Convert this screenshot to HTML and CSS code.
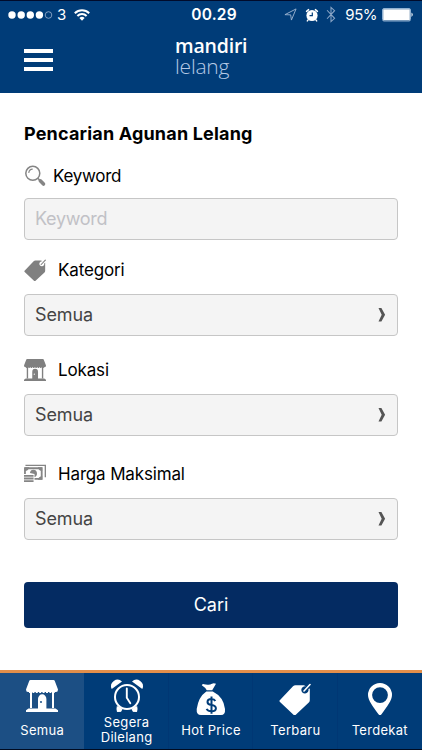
FILE: index.html
```html
<!DOCTYPE html>
<html lang="id">
<head>
<meta charset="utf-8">
<meta name="viewport" content="width=device-width, initial-scale=1">
<title>Mandiri Lelang</title>
<link rel="stylesheet" href="styles.css">
</head>
<body>
<svg class="symbols" aria-hidden="true">
  <symbol id="tag" viewBox="0 0 32 32">
    <path fill="currentColor" fill-rule="evenodd" d="M.8 17.200 14 3.200Q15 2.200 16.500 2.200H25L27 3.500A3.600 3.600 0 1 0 29.400 6L30.800 5.500V17.200Q30.800 18.600 29.800 19.600L16.800 31.800Q15.600 32.800 14.500 31.800L1 18.900Q0 18 .8 17.200Z"/>
    <path d="m25 8 6-6.500" fill="none" stroke="currentColor" stroke-width="1.600" stroke-linecap="round"/>
  </symbol>
  <symbol id="shop" viewBox="0 0 32 32">
    <path fill="currentColor" d="M4.500 0h23q1 0 1.300 1L32 9.500Q32 12 30 12H2Q0 12 0 9.500L3.200 1Q3.500 0 4.500 0ZM4 11h2v17H4zM26 11h2v17h-2zM12 28.500V19a4.200 4.700 0 0 1 8.400 0v9.500zM2.500 28.500h27L32 30.200V32H0v-1.800z"/>
    <path d="M3 12h26" stroke="currentColor" stroke-width="2" stroke-dasharray="2 1.400"/>
    <circle class="knob" cx="15" cy="22" r=".9"/>
  </symbol>
</svg>
<header class="header">
  <div class="status">
    <div class="signal">
      <svg class="dots" viewBox="0 0 46 10"><g fill="#fff"><circle cx="4" cy="5" r="3.700"/><circle cx="13.200" cy="5" r="3.700"/><circle cx="22.300" cy="5" r="3.700"/><circle cx="31.400" cy="5" r="3.700"/></g><circle cx="40.500" cy="5" r="3.300" fill="none" stroke="#9eb4d0" stroke-width=".8"/></svg>
      <span>3</span>
      <svg class="wifi" viewBox="0 0 16 12"><g fill="none" stroke="#fff" stroke-width="2"><path d="M.8 4.300a10.300 10.300 0 0 1 14.400 0M3.400 7a6.500 6.500 0 0 1 9.200 0"/></g><path fill="#fff" d="M5.400 9a3.700 3.700 0 0 1 5.200 0L8 11.800z"/></svg>
    </div>
    <time class="clock">00.29</time>
    <div class="device">
      <svg class="arrow" viewBox="0 0 14 14"><path d="M1 7.200 13 1 8 13 7.200 7.400Z" fill="none" stroke="#9cb3d0"/></svg>
      <svg class="alarm" viewBox="0 0 14 14"><circle cx="7" cy="7.500" r="5.600" fill="#fff"/><path d="M1.500 3.400 3.600 1.600M12.500 3.400 10.400 1.600M3 12l-.7.900m8.700-.9.700.9" stroke="#fff" stroke-width="1.400" stroke-linecap="round"/><path d="M7.300 4.500v3.200H4.500" fill="none" stroke="#003c78" stroke-width="1.200"/></svg>
      <svg class="bluetooth" viewBox="0 0 10 18"><path d="m.8 4.500 8 8.500L5 16.500v-15L8.800 5l-8 8.500" fill="none" stroke="#8da8c8" stroke-width="1.100"/></svg>
      <span class="percent">95%</span>
      <svg class="battery" viewBox="0 0 32 14"><rect x=".5" y=".5" width="28" height="12.500" rx="1.500" fill="none" stroke="#8fb0d1"/><path fill="#fff" d="M1.200 1.200h26.600v11.100h-26.600zM29.500 4.500q2.500 2.200 0 4.500z"/></svg>
    </div>
  </div>
  <div class="bar">
    <button class="menu" aria-label="Menu"><i></i><i></i><i></i></button>
    <div class="logo"><b>mandiri</b><span>lelang</span></div>
  </div>
</header>

<main class="form">
  <h1>Pencarian Agunan Lelang</h1>
  <div class="label keyword-label">
    <svg viewBox="0 0 22 22"><g fill="none" stroke="#858585"><circle cx="8.800" cy="8.300" r="7" stroke-width="1.500"/><path d="M4.800 8a4 4 0 0 1 3.900-3.900" stroke-width="1.100"/><path d="m13.800 13.300 2.200 2.200" stroke-width="1.500"/><path d="m16.300 15.800 3.200 3.200" stroke-width="3.600" stroke-linecap="round"/></g></svg>
    <span>Keyword</span>
  </div>
  <input class="field" type="text" placeholder="Keyword">
  <div class="label">
    <svg viewBox="0 0 32 32"><use href="#tag"/></svg>
    <span>Kategori</span>
  </div>
  <div class="field select"><span>Semua</span><svg class="chevron" viewBox="0 0 8 14"><path d="M.5 0h2.900l3.700 6.700L3.400 13.500H.5l3.200-6.800z"/></svg></div>
  <div class="label location-label">
    <svg viewBox="0 0 32 32"><use href="#shop"/></svg>
    <span>Lokasi</span>
  </div>
  <div class="field select"><span>Semua</span><svg class="chevron" viewBox="0 0 8 14"><path d="M.5 0h2.900l3.700 6.700L3.400 13.500H.5l3.200-6.800z"/></svg></div>
  <div class="label price-label">
    <svg viewBox="0 0 23 19"><g fill="none" stroke="#858585"><path d="M1.500 1h20.800v12.500" stroke-width="1.400"/><path d="M1 10V4h17.500v11.200H11" stroke-width="1.900"/></g><g fill="#858585"><path d="M1 3h4.500Q4.800 6.500 1 7zm18 0h-4.500q.7 3.500 4.500 4zm0 13h-4.500q.7-3.500 4.500-4z"/><path d="M6.200 9a3.700 4 0 1 1 4.800 4.300V10z"/></g><path d="M0 12h10M0 14.700h10M0 17.400h10" stroke="#858585" stroke-width="1.900"/></svg>
    <span>Harga Maksimal</span>
  </div>
  <div class="field select"><span>Semua</span><svg class="chevron" viewBox="0 0 8 14"><path d="M.5 0h2.900l3.700 6.700L3.400 13.500H.5l3.200-6.800z"/></svg></div>
  <button class="submit">Cari</button>
</main>

<nav class="tabs">
  <a class="tab active"><svg viewBox="0 0 32 32"><use href="#shop"/></svg><span>Semua</span></a>
  <a class="tab tall">
    <svg viewBox="0 0 32 32"><g fill="#fff"><path d="M.7 9A6.500 6.500 0 0 1 11 1.500zm30.600 0A6.500 6.500 0 0 0 21 1.500z"/><path d="m6 25 5 3.500-1.200 3L6 32q-1-3 0-7zm20 0-5 3.500 1.200 3L26 32q1-3 0-7z"/></g><circle cx="16" cy="17" r="13.600" fill="#003c78"/><path fill="#fff" d="m6.500 26 5 3-1.400 2.800H7Q5.600 30 6.500 26Zm19 0-5 3 1.400 2.800H25q1.400-1.800.5-5.800Z"/><circle cx="16" cy="17" r="12" fill="#003c78" stroke="#fff" stroke-width="2"/><path d="M15.800 8.500v9.300l3.500 5.400" fill="none" stroke="#fff" stroke-width="1.900" stroke-linecap="round"/></svg>
    <span>Segera<br>Dilelang</span>
  </a>
  <a class="tab">
    <svg viewBox="0 0 32 32"><path fill="#fff" d="M6.800 2.300Q7.500.8 9 1.200l3.500.5Q15 2 17 .7q1.500-.9 4 0l-3.800 6.600h-5.400Q10 4.300 6.800 2.300ZM11.300 8.500h6.500Q28.700 14 30 26q.5 6-4 6H6q-4.800 0-4.300-6Q3.500 13.800 11.300 8.500Z"/><path d="M20.300 18q-1-2-3.800-2-4 .2-4 3 0 2.400 3.900 3 4.500.6 4.500 3.300 0 3-4.300 3-3.800 0-5-2.400M16.500 13.500v17.200" fill="none" stroke="#003c78" stroke-width="2"/></svg>
    <span>Hot Price</span>
  </a>
  <a class="tab"><svg viewBox="0 0 32 32"><use href="#tag"/></svg><span>Terbaru</span></a>
  <a class="tab">
    <svg viewBox="0 0 32 32"><path fill="#fff" fill-rule="evenodd" d="M16 0a12 12 0 0 0-12 12c0 5.500 5 11.500 10.500 19.200q1.500 1.700 3 0C23 23.500 28 17.500 28 12A12 12 0 0 0 16 0Zm0 4.200a7.900 7.900 0 1 1 0 15.800 7.900 7.900 0 0 1 0-15.800Z"/></svg>
    <span>Terdekat</span>
  </a>
</nav>
</body>
</html>
```
FILE: styles.css
```css
* { box-sizing: border-box; }
body {
  margin: 0;
  height: 750px;
  display: flex;
  flex-direction: column;
  overflow: hidden;
  background: #fff;
  color: #000;
  font-family: Inter, "Liberation Sans", sans-serif;
}
svg { display: block; flex-shrink: 0; overflow: visible; }
.symbols { width: 0; height: 0; position: absolute; }
button { font: inherit; border: 0; padding: 0; }

.header { height: 93px; flex: none; background: #003c78; color: #fff; border-top: 1px solid #000b2b; }
.status { height: 27px; display: grid; grid-template-columns: 1fr auto 1fr; align-items: center; padding: 0 8px; font-size: 15px; }
.signal, .device { display: flex; align-items: center; }
.dots { width: 46px; height: 10px; }
.signal span { margin-left: 3px; }
.wifi { width: 16px; height: 12px; margin-left: 8px; }
.clock { font-size: 15.5px; font-weight: 600; letter-spacing: .2px; padding-left: 6px; }
.device { justify-content: flex-end; }
.arrow { width: 13px; height: 13px; }
.alarm { width: 14px; height: 14px; margin-left: 8px; }
.bluetooth { width: 10px; height: 17px; margin-left: 7px; }
.percent { margin-left: 9px; letter-spacing: -.5px; }
.battery { width: 32px; height: 14px; margin-left: 5px; }
.bar { height: 65px; display: grid; grid-template-columns: 151px 1fr; padding-left: 24px; }
.menu { width: 29px; height: 22px; margin-top: 21px; background: none; display: flex; flex-direction: column; justify-content: space-between; }
.menu i { width: 29px; height: 4px; background: #fff; }
.logo { display: flex; flex-direction: column; padding-top: 8px; font: 19.5px/20px "Open Sans", sans-serif; }
.logo b { font-weight: 600; letter-spacing: -.2px; }
.logo span { font-weight: 300; font-size: 21px; color: #b6c9e5; letter-spacing: -.2px; }

.form { flex: 1; padding: 28.5px 24px 0; display: flex; flex-direction: column; }
h1 { margin: 0; font-size: 18px; line-height: 24px; font-weight: 700; letter-spacing: .18px; }
.label { height: 24px; margin-top: 18px; display: flex; align-items: center; gap: 12px; color: #808080; font-size: 17px; letter-spacing: -.15px; --knob: #fff; }
.label svg { width: 22px; height: 22px; }
.label span { color: #000; }
.keyword-label { gap: 7px; letter-spacing: -.3px; }
.location-label { margin-top: 22px; }
.price-label { margin-top: 26px; }
.price-label svg { height: 19px; }
.knob { fill: var(--knob); }
.field { width: 100%; height: 42px; margin: 10px 0 0; padding: 0 10px; border: 1px solid #c6c6c6; border-radius: 4px; background: #f4f4f4; color: #444; font: 18px Inter, sans-serif; letter-spacing: -.1px; }
.keyword-label + .field { letter-spacing: -.3px; }
.field::placeholder { color: #c1c1c6; opacity: 1; }
.label + .select { margin-top: 12px; }
.select { display: flex; align-items: center; justify-content: space-between; }
.chevron { width: 8px; height: 14px; fill: #555; margin-right: 1px; }
.submit { height: 46px; margin-top: 42px; border-radius: 4px; background: #042b62; color: #fff; font-size: 18px; }

.tabs { flex: none; height: 80px; display: grid; grid-template-columns: repeat(5, 1fr); background: #003c78; border-top: 3px solid #e28f4b; border-bottom: 1px solid #000b20; }
.tab { display: flex; flex-direction: column; align-items: center; padding-top: 10px; color: #fff; box-shadow: inset -1px 0 #003774; --knob: #003c78; }
.tab:last-child { box-shadow: none; }
.tab svg { width: 32px; height: 32px; }
.tab span { margin-top: 8px; font-size: 13px; line-height: 15px; text-align: center; letter-spacing: .3px; white-space: nowrap; }
.active { background: #1c4f84; padding-top: 7px; box-shadow: none; }
.active span { margin-top: 11px; }
.tall { padding-top: 7px; }
.tall span { margin-top: 3px; }
```
